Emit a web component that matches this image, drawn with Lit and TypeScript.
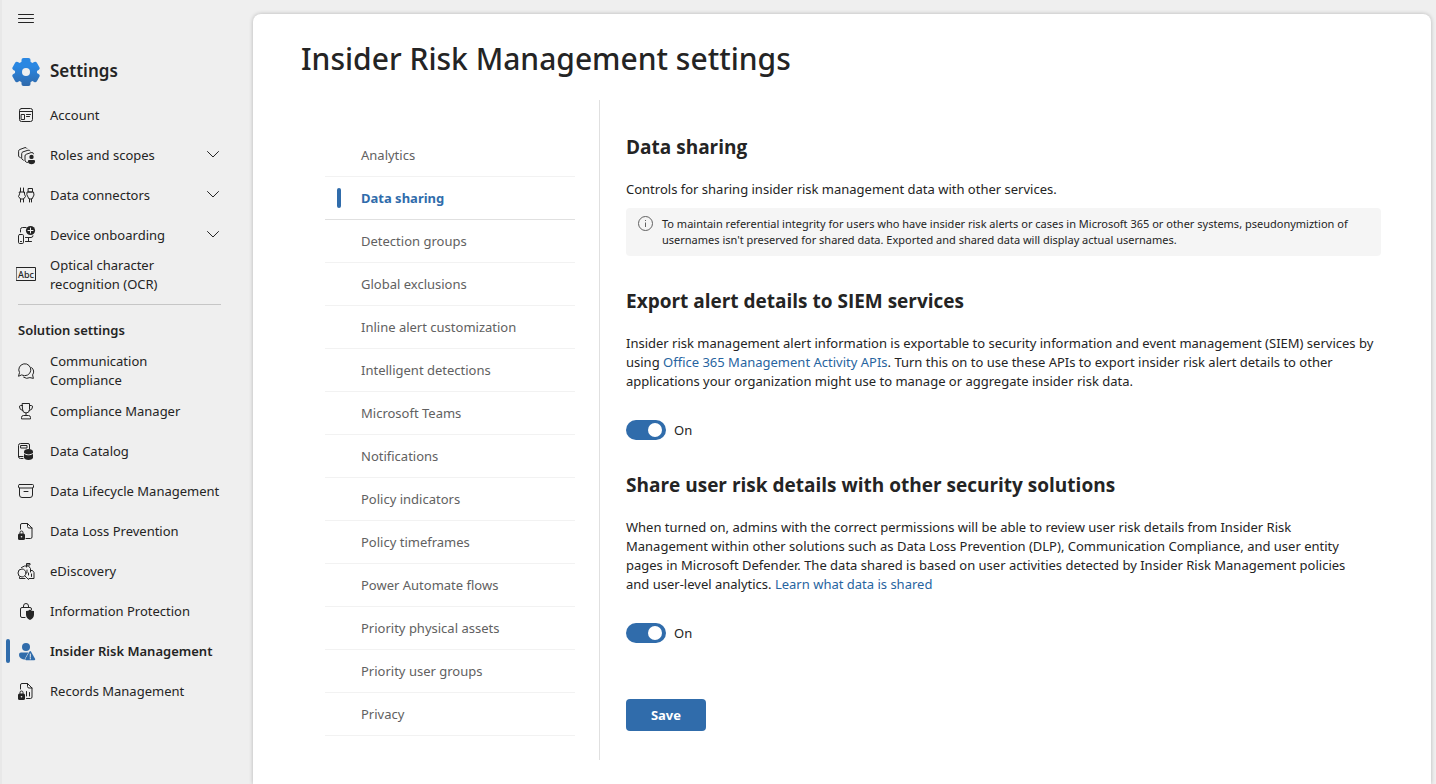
import { LitElement, html, css, svg, nothing, TemplateResult } from "lit";
import { customElement, property, state } from "lit/decorators.js";
import { classMap } from "lit/directives/class-map.js";

const icons: Record<string, TemplateResult> = {
  account: svg`
    <rect x="3.5" y="3.5" width="13" height="13" rx="2" />
    <path d="M3.5 6.5h13M10.500 9.500h4M10.500 11.500h3" />
    <rect x="5.500" y="9.500" width="3" height="5" />`,
  roles: svg`
    <path d="M4.4 12.6 2.6 11.400V6.200Q2.600 4.900 3.800 4.500L9 2.600Q10.300 2.400 10.800 3.300" />
    <path d="M7.400 15.200 5.700 13.800V8.600Q5.700 7.300 6.900 6.900L12 5.200Q13.500 4.900 14.100 5.800" />
    <path d="M11.500 17.400H10.700L9 16V11Q9 9.700 10.200 9.300L15 7.600Q17.500 7 17.500 8.800" />
    <circle class="solid" cx="15.500" cy="11.900" r="2.200" />
    <path class="solid" d="M13.200 15h4.600a1.300 1.300 0 0 1 1.300 1.300c0 1.800-1.600 2.900-3.600 2.900s-3.600-1.100-3.600-2.900a1.300 1.300 0 0 1 1.300-1.300z" />`,
  connectors: svg`
    <path d="M4.500 3v4M7.500 3v4M3.500 7h5v2.200l1 2.300-2 2.500H4.500L2.500 11.500l1-2.300zM4.500 14v3M7.500 14v3" />
    <path d="M12.500 3.500h4v3.500h-4zM11.500 7h6l.500 3-2 4h-3l-2-4zM13.500 14v3M15.500 14v3" />`,
  device: svg`
    <rect x="2.500" y="9.500" width="5" height="9" rx="1.200" />
    <path d="M4.500 16.500h1M4.500 7V4.500Q4.500 2.500 6.500 2.500H10M9.500 12.500H15q2 0 2-1.700M12.500 12.500v3.500M9.500 16.500h6" />
    <circle class="solid" cx="14.500" cy="5.500" r="4.600" />
    <path class="cut" d="M14.500 3v5M12 5.500h5" />`,
  ocr: svg`
    <rect x=".5" y="2.500" width="19" height="13" />
    <text class="abc" x="10" y="12.500" text-anchor="middle">Abc</text>`,
  chat: svg`
    <path d="M2.600 14.900 3.500 11.600A6 6 0 1 1 6 14.100z" />
    <path d="M15.700 6.600a5.700 5.700 0 0 1 .9 7.300l.8 3.500-3.500-.8a6 6 0 0 1-6.300-.4" />`,
  trophy: svg`
    <path d="M6.500 2.500h7v6a3.500 3.500 0 0 1-7 0zM6.500 4.500h-2Q3.500 4.500 3.500 6q0 3 3.200 3.500M13.500 4.500h2q1 0 1 1.500 0 3-3.200 3.500M10 12v2.500M5.500 17.500v-1q0-2 2-2h5q2 0 2 2v1z" />`,
  catalog: svg`
    <path d="M7 17.500H4.500q-2 0-2-2v-11q0-2 2-2h7.500q1.500 0 1.500 1.500V8M2.500 15.500H7" />
    <rect x="5" y="4.500" width="6" height="2.500" />
    <path class="solid" d="M8 10.500C8 9 10 8 12.500 8s4.500 1 4.500 2.500v6c0 1.500-2 2.500-4.500 2.500S8 18 8 16.500z" />
    <path class="cut" d="M8 12.300c1 1 2.600 1.500 4.500 1.500s3.500-.5 4.500-1.500" />`,
  archive: svg`
    <rect x="2.500" y="3.500" width="15" height="3.500" rx="1" />
    <path d="M3.500 7v7q0 2.500 2.500 2.500h8q2.500 0 2.500-2.500V7M8 10.500h4" />`,
  fileLock: svg`
    <path d="M4.500 8V4q0-1.500 1.500-1.500h5.500l4.500 4.500v9q0 1.500-1.500 1.500H10M11.500 2.500v3Q11.500 7 13 7h3" />
    <path class="solid" d="M3.500 12.500h4q1.500 0 1.500 1.500v3.500q0 1.500-1.500 1.500h-4Q2 19 2 17.500V14q0-1.500 1.500-1.500z" />
    <path d="M4 12.500v-1a1.500 1.500 0 0 1 3 0v1" />
    <circle class="hole" cx="5.500" cy="15.700" r=".8" />`,
  discovery: svg`
    <circle cx="6" cy="12" r="4" />
    <path d="M9 15l3.500 3.500M10.500 6V2.500h3.500v1.500h-3.500M5.500 6.500l3-1.500h4l2 2.500v3.500M14.500 9.500h2l1.500 2v6H13M3.500 16.500v1H9M11 9v2.500M12.500 12v2M15.500 13v2.500" />`,
  lockShield: svg`
    <path d="M9 16.500H6q-1.500 0-1.500-1.500V8q0-1.500 1.500-1.500h8q1.500 0 1.500 1.500v.5M7.500 6.500V5a2.500 2.500 0 0 1 5 0v1.500" />
    <path class="solid" d="M14 8.500q1.700 1.500 4 1.500v3.500q0 3.700-4 5.500-4-1.800-4-5.500V10q2.300 0 4-1.500z" />`,
  risk: svg`
    <circle class="solid" cx="10" cy="6" r="4" />
    <path class="solid" d="M5 11.500h8.500L9.500 18.500C5.500 18.500 3 17 3 13.500q0-2 2-2z" />
    <path class="solid halo" d="M13.500 10.500q.7-1 1.500 0l4.200 7.600q.3 1.100-.8 1.100h-8.300q-1.100 0-.8-1.100z" />
    <path class="cut" d="M14.300 13v3M14.300 17v1" />`,
  records: svg`
    <path d="M4.500 8V4q0-1.500 1.500-1.500h5.500l4.500 4.500v9q0 1.500-1.500 1.500H10.500M11.500 2.500v3Q11.500 7 13 7h3M10.500 10.500V15M13.500 11.500V15" />
    <path class="solid" d="M3.500 12.500h4q1.500 0 1.500 1.500v3.500q0 1.500-1.500 1.500h-4Q2 19 2 17.500V14q0-1.500 1.500-1.500z" />
    <path d="M4 12.500v-1a1.500 1.500 0 0 1 3 0v1" />
    <circle class="hole" cx="5.500" cy="15.700" r=".8" />`,
};

interface Item {
  label: string;
  icon: string;
  expandable?: boolean;
}

const generalItems: Item[] = [
  { label: "Account", icon: "account" },
  { label: "Roles and scopes", icon: "roles", expandable: true },
  { label: "Data connectors", icon: "connectors", expandable: true },
  { label: "Device onboarding", icon: "device", expandable: true },
  { label: "Optical character recognition (OCR)", icon: "ocr" },
];

const solutionItems: Item[] = [
  { label: "Communication Compliance", icon: "chat" },
  { label: "Compliance Manager", icon: "trophy" },
  { label: "Data Catalog", icon: "catalog" },
  { label: "Data Lifecycle Management", icon: "archive" },
  { label: "Data Loss Prevention", icon: "fileLock" },
  { label: "eDiscovery", icon: "discovery" },
  { label: "Information Protection", icon: "lockShield" },
  { label: "Insider Risk Management", icon: "risk" },
  { label: "Records Management", icon: "records" },
];

const sections = [
  "Analytics",
  "Data sharing",
  "Detection groups",
  "Global exclusions",
  "Inline alert customization",
  "Intelligent detections",
  "Microsoft Teams",
  "Notifications",
  "Policy indicators",
  "Policy timeframes",
  "Power Automate flows",
  "Priority physical assets",
  "Priority user groups",
  "Privacy",
];

@customElement("settings-sidebar")
export class SettingsSidebar extends LitElement {
  @property() active = "Insider Risk Management";

  static styles = css`
    :host {
      display: block;
      box-sizing: border-box;
      padding-top: 8px;
      border-left: 2px solid #e8e8e8;
      line-height: 19px;
    }
    .menu {
      display: block;
      margin: 0 0 30px 14px;
      padding: 0;
      border: 0;
      background: none;
      color: inherit;
      height: 20px;
    }
    svg {
      display: block;
      flex: none;
    }
    .icon {
      fill: none;
      stroke: currentColor;
      stroke-width: 1;
      stroke-linecap: round;
      stroke-linejoin: round;
    }
    .solid {
      fill: currentColor;
      stroke: none;
    }
    .halo {
      stroke: #efefef;
      stroke-width: 1;
      paint-order: stroke;
    }
    .cut {
      stroke: #efefef;
      stroke-width: 1;
    }
    .hole {
      fill: #efefef;
      stroke: none;
    }
    .abc {
      fill: currentColor;
      stroke: none;
      font-size: 9px;
      font-weight: 500;
    }
    .title {
      display: flex;
      align-items: flex-start;
      gap: 10px;
      margin: 0 0 9px 10px;
    }
    .title h2 {
      margin: 0;
      font-size: 17px;
      line-height: 26px;
      font-weight: 600;
    }
    ul {
      list-style: none;
      margin: 0;
      padding: 0;
    }
    .item {
      display: flex;
      align-items: center;
      min-height: 40px;
      padding: 0 32px 0 4px;
      color: inherit;
      text-decoration: none;
    }
    .bar {
      width: 4px;
      height: 24px;
      margin-right: 6px;
      border-radius: 2px;
      flex: none;
    }
    .label {
      flex: 1;
      margin-left: 14px;
    }
    .chosen .bar {
      background: #306cab;
    }
    .chosen .icon {
      color: #306cab;
    }
    .chosen .label {
      font-weight: 600;
    }
    hr {
      margin: 9px 32px 15px 16px;
      border: 0;
      border-top: 1px solid #c6c6c6;
    }
    h3 {
      margin: 0 0 11px 16px;
      font-size: 13px;
      line-height: 20px;
      font-weight: 600;
    }
  `;

  private row(item: Item) {
    const chosen = item.label === this.active;
    return html`<li>
      <a
        href="#"
        class=${classMap({ item: true, chosen })}
        aria-current=${chosen ? "page" : nothing}
      >
        <span class="bar"></span>
        <svg class="icon" width="20" height="20" viewBox="0 0 20 20" aria-hidden="true">${icons[item.icon]}</svg>
        <span class="label">${item.label}</span>
        ${item.expandable
          ? html`<svg class="icon" width="16" height="16" viewBox="0 0 16 16" aria-hidden="true">
              <path d="M2.500 4.500l5.500 5.500L13.500 4.500" />
            </svg>`
          : nothing}
      </a>
    </li>`;
  }

  render() {
    return html`
      <button class="menu" type="button" aria-label="Toggle navigation">
        <svg class="icon" width="20" height="20" viewBox="0 0 20 20" aria-hidden="true">
          <path d="M2.500 6.500h15M2.500 10.500h15M2.500 14.500h15" />
        </svg>
      </button>
      <div class="title">
        <svg width="28" height="28" viewBox="0 0 28 28" aria-hidden="true">
          <defs>
            <linearGradient id="blue" x1="0" y1="0" x2="0" y2="1">
              <stop offset=".3" stop-color="#2a87e2" />
              <stop offset="1" stop-color="#3069aa" />
            </linearGradient>
            <mask id="gear">
              <g fill="#fff">
                <circle cx="14" cy="14" r="11" />
                <rect x="9.500" y="0" width="9" height="28" rx="2" />
                <rect x="9.500" y="0" width="9" height="28" rx="2" transform="rotate(60 14 14)" />
                <rect x="9.500" y="0" width="9" height="28" rx="2" transform="rotate(120 14 14)" />
              </g>
              <circle cx="14" cy="14" r="4" fill="#000" />
            </mask>
          </defs>
          <rect width="28" height="28" fill="url(#blue)" mask="url(#gear)" />
        </svg>
        <h2>Settings</h2>
      </div>
      <nav aria-label="Settings">
        <ul>${generalItems.map((i) => this.row(i))}</ul>
        <hr />
        <h3>Solution settings</h3>
        <ul>${solutionItems.map((i) => this.row(i))}</ul>
      </nav>
    `;
  }
}

@customElement("toggle-switch")
export class ToggleSwitch extends LitElement {
  @property() name = "";
  @state() private on = true;

  static styles = css`
    :host {
      display: block;
    }
    label {
      display: flex;
      width: max-content;
      align-items: center;
      gap: 8px;
      line-height: 20px;
    }
    input {
      appearance: none;
      display: flex;
      box-sizing: border-box;
      width: 40px;
      height: 20px;
      margin: 0;
      padding: 3px;
      border-radius: 10px;
      background: #8a8a8a;
    }
    input::before {
      content: "";
      width: 14px;
      height: 14px;
      border-radius: 50%;
      background: #fff;
    }
    input:checked {
      justify-content: flex-end;
      padding-right: 4px;
      background: #306cab;
    }
  `;

  render() {
    return html`<label>
      <input
        type="checkbox"
        role="switch"
        title=${this.name}
        .checked=${this.on}
        @change=${(e: Event) => (this.on = (e.target as HTMLInputElement).checked)}
      />
      ${this.on ? "On" : "Off"}
    </label>`;
  }
}

@customElement("app-root")
export class AppRoot extends LitElement {
  @state() private section = "Data sharing";

  static styles = css`
    :host {
      display: grid;
      grid-template-columns: 253px minmax(0, 1fr);
      min-height: 100vh;
      background: #efefef;
      color: #242424;
      font-family: "Noto Sans", "Open Sans", sans-serif;
      font-size: 13px;
      line-height: 19px;
    }
    main {
      margin: 14px 5px 0 0;
      padding: 24px 50px 24px 48px;
      border-radius: 8px 8px 0 0;
      background: #fff;
      box-shadow: 0 0 4px rgba(0, 0, 0, 0.24);
    }
    h1 {
      margin: 0 0 20px;
      font-size: 30px;
      line-height: 42px;
      font-weight: 500;
    }
    .body {
      display: grid;
      grid-template-columns: 250px minmax(0, 1fr);
      column-gap: 24px;
      margin-left: 24px;
    }
    .sections {
      list-style: none;
      margin: 0;
      padding: 34px 0 0;
    }
    .section {
      display: flex;
      align-items: center;
      gap: 20px;
      height: 42px;
      padding-left: 12px;
      border-bottom: 1px solid #f2f2f2;
      color: #616161;
      text-decoration: none;
    }
    .mark {
      width: 4px;
      height: 20px;
      border-radius: 2px;
    }
    .chosen {
      border-bottom-color: #e0e0e0;
      color: #306cab;
      font-weight: 700;
    }
    .chosen .mark {
      background: #306cab;
    }
    .content {
      padding: 33px 0 29px 26px;
      border-left: 1px solid #e0e0e0;
    }
    h2 {
      margin: 0 0 19px;
      font-family: "Open Sans", "Noto Sans", sans-serif;
      font-size: 19px;
      line-height: 28px;
      font-weight: 700;
    }
    p {
      margin: 0;
      padding-right: 6px;
    }
    .note {
      display: flex;
      gap: 8px;
      margin: 9px 0 31px;
      padding: 8px 12px;
      border-radius: 4px;
      background: #f5f5f5;
      font-size: 11px;
      line-height: 16px;
    }
    .note svg {
      flex: none;
      color: #616161;
    }
    .link {
      color: #2764a0;
      text-decoration: none;
    }
    toggle-switch {
      margin: 29px 0 31px;
    }
    .save {
      display: block;
      min-width: 80px;
      height: 32px;
      margin-top: 56px;
      border: 0;
      border-radius: 4px;
      background: #306cab;
      color: #fff;
      font: inherit;
      font-weight: 700;
    }
  `;

  render() {
    return html`
      <settings-sidebar></settings-sidebar>
      <main>
        <h1>Insider Risk Management settings</h1>
        <div class="body">
          <nav aria-label="Insider risk settings">
            <ul class="sections">
              ${sections.map(
                (name) => html`<li>
                  <a
                    href="#"
                    class=${classMap({ section: true, chosen: name === this.section })}
                    @click=${(e: Event) => {
                      e.preventDefault();
                      this.section = name;
                    }}
                    ><span class="mark"></span>${name}</a
                  >
                </li>`
              )}
            </ul>
          </nav>
          <div class="content">
            <h2>Data sharing</h2>
            <p>Controls for sharing insider risk management data with other services.</p>
            <div class="note">
              <svg width="16" height="16" viewBox="0 0 16 16" fill="none" stroke="currentColor" aria-hidden="true">
                <circle cx="7.500" cy="7.500" r="7" />
                <path d="M7.500 6.500v4.500M7.500 4v1" />
              </svg>
              <span
                >To maintain referential integrity for users who have insider risk alerts or cases in Microsoft 365 or
                other systems, pseudonymiztion of usernames isn't preserved for shared data. Exported and shared data
                will display actual usernames.</span
              >
            </div>
            <h2>Export alert details to SIEM services</h2>
            <p>
              Insider risk management alert information is exportable to security information and event management
              (SIEM) services by using <a class="link" href="#">Office 365 Management Activity APIs</a>. Turn this on
              to use these APIs to export insider risk alert details to other applications your organization might use
              to manage or aggregate insider risk data.
            </p>
            <toggle-switch name="Export alert details to SIEM services"></toggle-switch>
            <h2>Share user risk details with other security solutions</h2>
            <p>
              When turned on, admins with the correct permissions will be able to review user risk details from Insider
              Risk Management within other solutions such as Data Loss Prevention (DLP), Communication Compliance, and
              user entity pages in Microsoft Defender. The data shared is based on user activities detected by Insider
              Risk Management policies and&nbsp;user-level analytics.
              <a class="link" href="#">Learn what data is shared</a>
            </p>
            <toggle-switch name="Share user risk details with other security solutions"></toggle-switch>
            <button class="save" type="button">Save</button>
          </div>
        </div>
      </main>
    `;
  }
}
